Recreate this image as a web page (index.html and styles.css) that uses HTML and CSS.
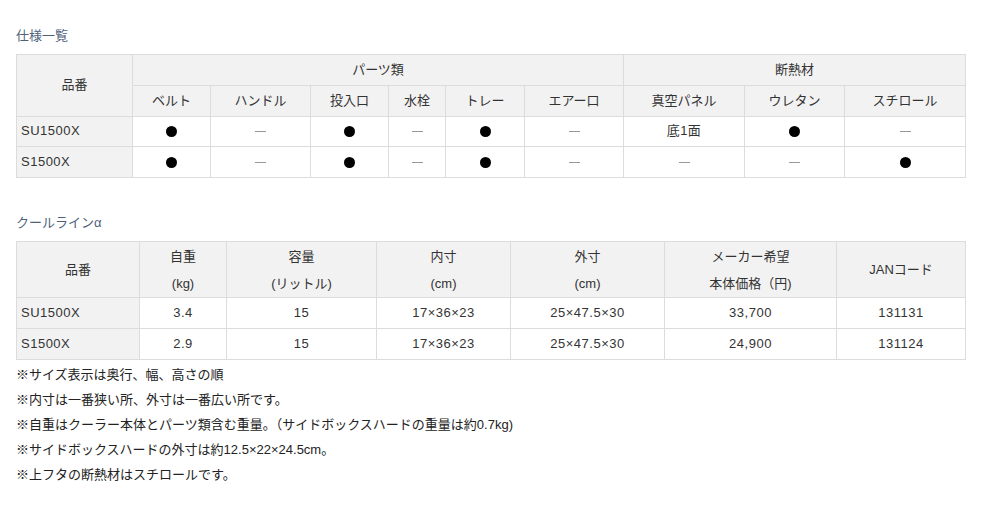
FILE: index.html
```html
<!DOCTYPE html>
<html lang="ja">
<head>
<meta charset="utf-8">
<title>仕様一覧</title>
<link rel="stylesheet" href="styles.css">
</head>
<body>
<div class="page">
  <h2 class="ttl">仕様一覧</h2>
  <table class="spec spec1">
    <colgroup>
      <col style="width:116px"><col style="width:78px"><col style="width:100px"><col style="width:78px"><col style="width:57px"><col style="width:79px"><col style="width:99px"><col style="width:121px"><col style="width:100px"><col style="width:121px">
    </colgroup>
    <tr>
      <th rowspan="2">品番</th>
      <th colspan="6">パーツ類</th>
      <th colspan="3">断熱材</th>
    </tr>
    <tr>
      <th>ベルト</th><th>ハンドル</th><th>投入口</th><th>水栓</th><th>トレー</th><th>エアー口</th><th>真空パネル</th><th>ウレタン</th><th>スチロール</th>
    </tr>
    <tr>
      <th class="name">SU1500X</th>
      <td><span class="dot"></span></td><td><span class="dash"></span></td><td><span class="dot"></span></td><td><span class="dash"></span></td><td><span class="dot"></span></td><td><span class="dash"></span></td><td>底1面</td><td><span class="dot"></span></td><td><span class="dash"></span></td>
    </tr>
    <tr>
      <th class="name">S1500X</th>
      <td><span class="dot"></span></td><td><span class="dash"></span></td><td><span class="dot"></span></td><td><span class="dash"></span></td><td><span class="dot"></span></td><td><span class="dash"></span></td><td><span class="dash"></span></td><td><span class="dash"></span></td><td><span class="dot"></span></td>
    </tr>
  </table>

  <h2 class="ttl ttl2">クールラインα</h2>
  <table class="spec spec2">
    <colgroup>
      <col style="width:123px"><col style="width:87px"><col style="width:150px"><col style="width:134px"><col style="width:154px"><col style="width:172px"><col style="width:129px">
    </colgroup>
    <tr class="head2">
      <th>品番</th>
      <th>自重<br>(kg)</th>
      <th>容量<br>(リットル)</th>
      <th>内寸<br>(cm)</th>
      <th>外寸<br>(cm)</th>
      <th>メーカー希望<br>本体価格（円)</th>
      <th>JANコード</th>
    </tr>
    <tr>
      <th class="name">SU1500X</th>
      <td>3.4</td><td>15</td><td>17×36×23</td><td>25×47.5×30</td><td>33,700</td><td>131131</td>
    </tr>
    <tr>
      <th class="name">S1500X</th>
      <td>2.9</td><td>15</td><td>17×36×23</td><td>25×47.5×30</td><td>24,900</td><td>131124</td>
    </tr>
  </table>

  <ul class="notes">
    <li>※サイズ表示は奥行、幅、高さの順</li>
    <li>※内寸は一番狭い所、外寸は一番広い所です。</li>
    <li>※自重はクーラー本体とパーツ類含む重量。（サイドボックスハードの重量は約0.7kg)</li>
    <li>※サイドボックスハードの外寸は約12.5×22×24.5cm。</li>
    <li>※上フタの断熱材はスチロールです。</li>
  </ul>
</div>
</body>
</html>
```

FILE: styles.css
```css
html, body {
  margin: 0;
  padding: 0;
  background: #fff;
}
body {
  font-family: "Liberation Sans", "Noto Sans CJK JP", sans-serif;
  font-size: 13px;
  color: #333;
}
.page {
  padding: 0 27px 0 16px;
  width: 949px;
}
.ttl {
  margin: 0;
  padding-top: 26px;
  margin-bottom: 8px;
  font-size: 13px;
  line-height: 20px;
  font-weight: normal;
  color: #4f5f7a;
}
.ttl2 {
  padding-top: 0;
  margin-top: 35px;
}
.spec {
  border-collapse: collapse;
  table-layout: fixed;
  width: 949px;
}
.spec th, .spec td {
  border: 1px solid #dcdcdc;
  padding: 0 4px;
  height: 29.75px;
  text-align: center;
  vertical-align: middle;
  font-weight: normal;
  line-height: 20px;
  color: #333;
}
.spec th {
  background: #f2f2f2;
}
.spec td {
  background: #fff;
  letter-spacing: 0.5px;
}
.spec th.name {
  text-align: left;
  padding-left: 4px;
  letter-spacing: 0.5px;
}
.head2 th {
  height: 55px;
  line-height: 27px;
  padding-top: 0;
  padding-bottom: 0;
}
.dot {
  display: inline-block;
  width: 11px;
  height: 11px;
  border-radius: 50%;
  background: #000;
  vertical-align: middle;
}
.dash {
  display: inline-block;
  width: 11px;
  height: 1px;
  background: #999;
  vertical-align: middle;
}
.notes {
  list-style: none;
  margin: 2px 0 0;
  padding: 0;
  line-height: 25px;
  color: #222;
}
```
